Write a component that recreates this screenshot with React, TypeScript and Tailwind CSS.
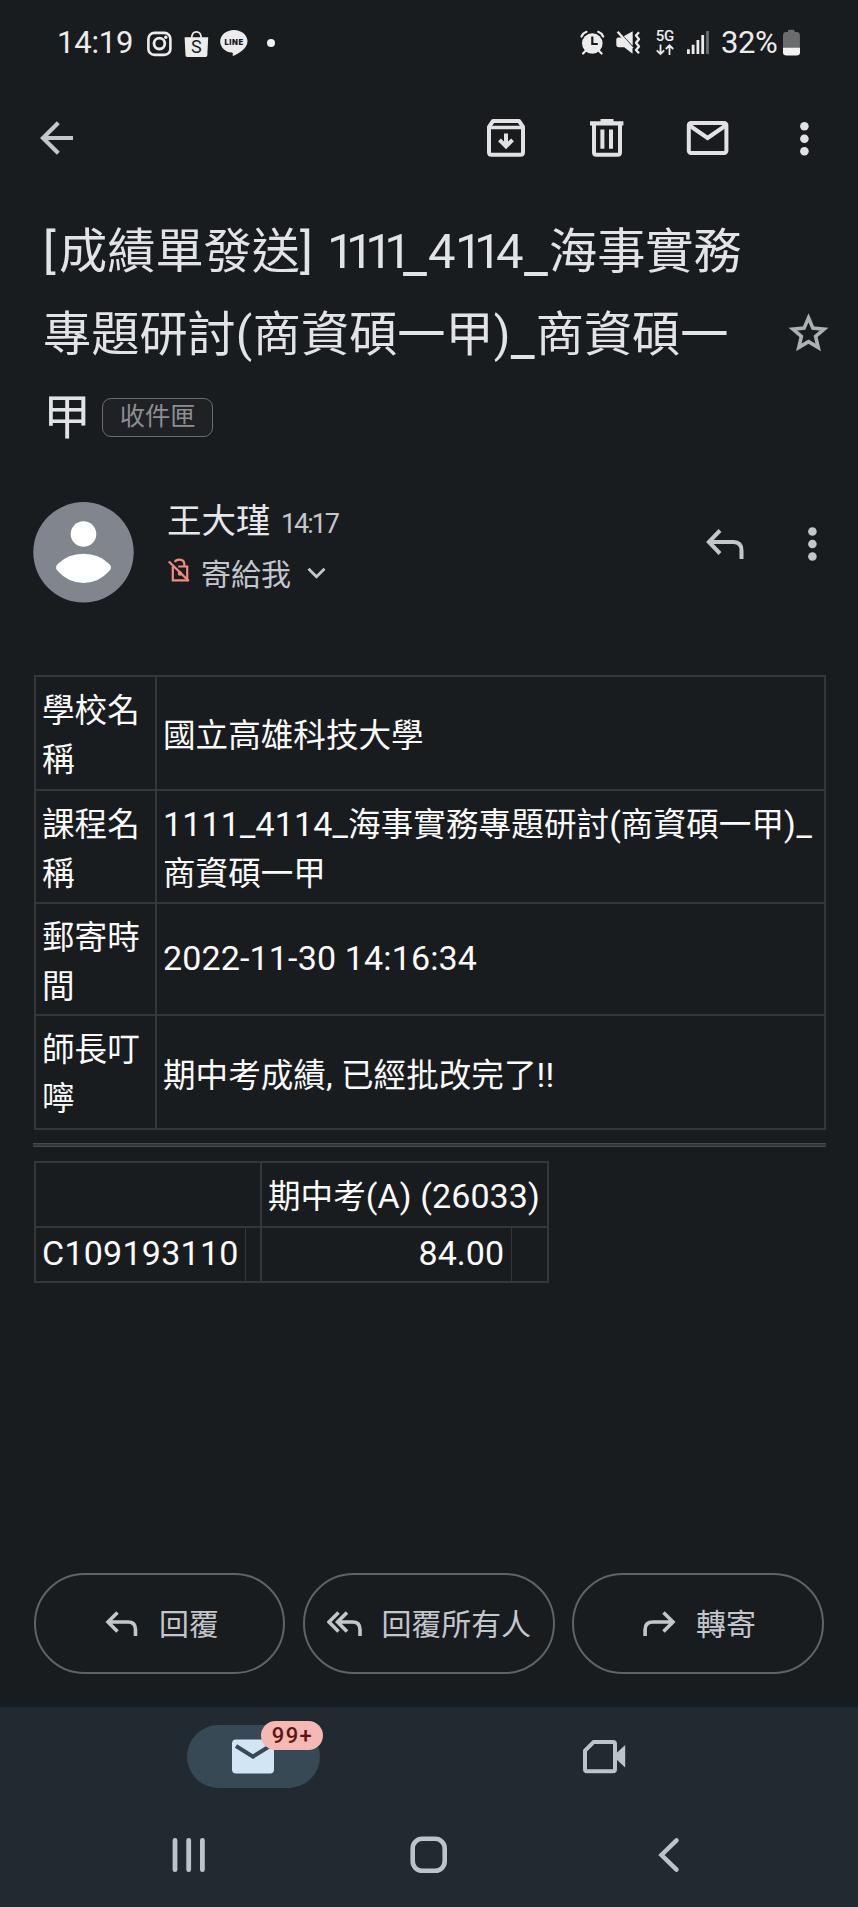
import type { ReactNode } from "react";

type IconProps = { box: [number, number, number, number]; className?: string; children: ReactNode };

function Icon({ box, className = "", children }: IconProps) {
  return (
    <svg
      viewBox={box.join(" ")}
      width={box[2]}
      height={box[3]}
      className={"block shrink-0 " + className}
      fill="none"
      aria-hidden="true"
    >
      {children}
    </svg>
  );
}

function StatusBar() {
  return (
    <div className="flex h-[84px] items-start pl-[57px] text-[#ececec]">
      <span className="mt-[25px] w-[90px] text-[31px] leading-[35px] tracking-[-0.2px]">14:19</span>
      <Icon box={[147, 31, 25, 26]} className="mt-[31px]">
        <rect x="148.4" y="32.9" width="22" height="22" rx="6" stroke="currentColor" strokeWidth="2.6" />
        <circle cx="159.4" cy="43.6" r="5.4" stroke="currentColor" strokeWidth="2.8" />
        <circle cx="165.8" cy="37.2" r="1.7" fill="currentColor" />
      </Icon>
      <Icon box={[184, 30, 25, 28]} className="ml-[12px] mt-[30px]">
        <path d="M191.6 38c.3-4 2.2-6.2 4.8-6.2s4.6 2.200 4.900 6.200" stroke="currentColor" strokeWidth="1.700" />
        <path d="M184.600 37.200h23.600l-.9 18c-.1 1.100-.7 1.700-1.800 1.700h-18.200c-1.100 0-1.700-.6-1.800-1.700z" fill="currentColor" />
        <text x="196.400" y="53" textAnchor="middle" fontSize="18" fontFamily="Roboto, sans-serif" fill="#191c1f">S</text>
      </Icon>
      <Icon box={[219, 29, 30, 28]} className="ml-[10px] mt-[29px]">
        <path
          d="M233.900 30c-7.600 0-13.700 5-13.700 11.400 0 5.700 4.900 10.400 11.500 11.200.9.200 1.300.7 1.200 1.500l-.3 1.900c5.200-2 14.900-7.600 14.900-14.600C247.500 35 241.500 30 233.900 30z"
          fill="currentColor"
        />
        <text x="233.800" y="44.800" textAnchor="middle" fontSize="7.600" fontWeight="900" textLength="18.500" fontFamily="Inter, sans-serif" fill="#191c1f">LINE</text>
      </Icon>
      <span className="ml-[18px] mt-[39px] size-[8px] rounded-full bg-[#f0f0f0]" />
      <Icon box={[581, 30, 25, 26]} className="ml-[305px] mt-[30px]">
        <circle cx="593.300" cy="43.500" r="10.300" fill="currentColor" />
        <path d="M582.500 36.500q1.500-3.500 5-4.700M604.200 36.500q-1.500-3.500-5-4.700" stroke="currentColor" strokeWidth="2.200" strokeLinecap="round" />
        <path d="M587 50.500l-3 3M599.600 50.500l3 3" stroke="currentColor" strokeWidth="2.200" strokeLinecap="round" />
        <path d="M593.300 36.500v7.500h5.500" stroke="#191c1f" strokeWidth="2.200" />
      </Icon>
      <Icon box={[616, 30, 26, 26]} className="ml-[10px] mt-[30px]">
        <path d="M617.300 39.500q0-2 2-2h4l10.200 11.800v4.400l-8.300-6.500h-5.200q-2.700 0-2.700-2.700z" fill="currentColor" />
        <path d="M624.800 36.200l8.900-4.900v14.400z" fill="currentColor" />
        <path d="M618.600 31.800l15 16.800" stroke="currentColor" strokeWidth="2.300" />
        <path d="M640 32.300l-3 3.200 3 3.700-3 3.600 3 3.700-3 3.500 3 3.300" stroke="currentColor" strokeWidth="2.300" strokeLinejoin="round" />
      </Icon>
      <Icon box={[653, 20, 26, 38]} className="ml-[11px] mt-[20px]">
        <text x="666" y="41" textAnchor="middle" fontSize="15" fontWeight="500" textLength="18.500" fontFamily="Roboto, sans-serif" fill="currentColor">5G</text>
        <path d="M661.500 44.500v9M657.800 50.300l3.700 3.700 3.700-3.700M670.500 55v-9M666.800 49l3.700-3.700 3.700 3.700" stroke="currentColor" strokeWidth="1.800" />
      </Icon>
      <Icon box={[687, 30, 24, 25]} className="ml-[8px] mt-[30px]">
        <path d="M689.400 49.200v4.900M694.100 44.800v9.300M698.900 40v14.100M703.700 35v19.100" stroke="currentColor" strokeWidth="2.800" />
        <path d="M708.500 31v23.100" stroke="#6b6d6f" strokeWidth="2.800" />
      </Icon>
      <span className="ml-[11px] mt-[25px] w-[61px] whitespace-nowrap text-[31px] leading-[35px] tracking-[-0.4px]">32%</span>
      <Icon box={[783, 29, 19, 27]} className="mt-[29px]">
        <path d="M789 32v-1q0-1.300 1.300-1.300h4q1.300 0 1.300 1.300v1h1.900q3.400 0 3.400 3.400V48H784V35.400q0-3.400 3.400-3.400z" fill="#6b6c6d" />
        <path d="M784 47.700h17v4.600q0 3.300-3.400 3.300h-10.200q-3.400 0-3.400-3.300z" fill="#f2f2f2" />
      </Icon>
    </div>
  );
}

function Toolbar() {
  return (
    <div className="flex h-[108px] items-start pl-[39px] text-[#e2e2e5]">
      <Icon box={[39, 121, 35, 35]} className="mt-[37px] text-[#c3c6cb]">
        <path d="M73 138H43.500M58.300 122.800L43 138l15.300 15.200" stroke="currentColor" strokeWidth="4.200" />
      </Icon>
      <Icon box={[486, 118, 40, 40]} className="ml-[412px] mt-[34px]">
        <path d="M493 121h26l4 5.800v25.400q0 2.600-2.600 2.600h-28.800q-2.600 0-2.600-2.600v-25.400z" stroke="currentColor" strokeWidth="4" strokeLinejoin="round" />
        <path d="M489 127.500h34" stroke="currentColor" strokeWidth="3.600" />
        <path d="M506 133.500v11M499.500 139.800l6.500 6.500 6.500-6.500" stroke="currentColor" strokeWidth="4" />
      </Icon>
      <Icon box={[589, 118, 36, 40]} className="ml-[63px] mt-[34px]">
        <path d="M590 121.200h33.400v4.300H590zM600.500 119h13v4h-13z" fill="currentColor" />
        <path d="M594 124v28.300q0 2.500 2.500 2.500h21q2.500 0 2.500-2.500V124" stroke="currentColor" strokeWidth="4" />
        <path d="M602.400 129.500v19.300M611 129.500v19.300" stroke="currentColor" strokeWidth="4" />
      </Icon>
      <Icon box={[686, 120, 44, 36]} className="ml-[61px] mt-[36px]">
        <rect x="688.800" y="123" width="37.600" height="30" rx="2.200" stroke="currentColor" strokeWidth="4" />
        <path d="M689.500 125.500l18.100 12.500 18.100-12.500" stroke="currentColor" strokeWidth="4.200" />
      </Icon>
      <Icon box={[799, 121, 12, 36]} className="ml-[69px] mt-[37px]">
        <g fill="currentColor">
          <circle cx="804.400" cy="126.200" r="4.300" />
          <circle cx="804.400" cy="138.700" r="4.300" />
          <circle cx="804.400" cy="151.300" r="4.300" />
        </g>
      </Icon>
    </div>
  );
}

function Subject() {
  return (
    <div className="flex h-[291px] items-start pl-[43px] pt-[18px]">
      <h1 className="w-[744px] whitespace-nowrap text-[48.200px] leading-[83px] text-[#e2e3e6]">
        <div className="flex">
          <span className="w-[16px]">[</span>
          <span>成績單發送</span>
          <span className="w-[27px]">]</span>
          <span className="w-[76px] text-[49px] tracking-[-8.400px]">1111</span>
          <span className="w-[25px] translate-y-[3px] text-[53px]">_</span>
          <span className="w-[27px] text-[49px]">4</span>
          <span className="w-[41px] text-[49px] tracking-[-8.400px]">11</span>
          <span className="w-[28px] text-[49px]">4</span>
          <span className="w-[25px] translate-y-[3px] text-[53px]">_</span>
          <span>海事實務</span>
        </div>
        <div className="flex">
          <span>專題研討</span>
          <span className="w-[17px]">(</span>
          <span>商資碩一甲</span>
          <span className="w-[17px]">)</span>
          <span className="w-[25px] translate-y-[3px] text-[53px]">_</span>
          <span>商資碩一</span>
        </div>
        <div className="flex h-[82px] items-center">
          <span>甲</span>
          <span className="ml-[10.500px] flex h-[39px] w-[111px] items-center rounded-[9px] border border-[#6b6d72] bg-[#1f2125] pl-[17px] text-[25.300px] leading-[36px] text-[#8c8e93]">
            收件匣
          </span>
        </div>
      </h1>
      <Icon box={[787, 312, 43, 42]} className="mt-[102px]">
        <path
          d="M808.500 317.800l4.400 10.300 11.200 1-8.500 7.400 2.600 10.900-9.700-5.800-9.700 5.800 2.600-10.900-8.500-7.400 11.200-1z"
          stroke="#adb0b5"
          strokeWidth="3.600"
        />
      </Icon>
    </div>
  );
}

function Sender() {
  return (
    <div className="flex h-[192px] items-start pl-[33px]">
      <Icon box={[33, 501, 102, 103]} className="mt-[18px]">
        <circle cx="83.500" cy="552.300" r="50.200" fill="#80858e" />
        <circle cx="83.500" cy="534" r="12.800" fill="#fff" />
        <path d="M56 567.500q0-2 2-3.800Q68 553.700 83.500 553.700t25.500 10q2 1.800 2 3.800t-2 3.800Q98.500 583 83.500 583T58 571.300q-2-1.800-2-3.800z" fill="#fff" />
      </Icon>
      <div className="ml-[32px] w-[539px] pt-[14px]">
        <div className="flex h-[48px] whitespace-nowrap leading-[48px]">
          <span className="w-[114px] text-[34.500px] text-[#e6e7ea]">王大瑾</span>
          <span className="mt-[3px] text-[27px] tracking-[-2.100px] text-[#c3c6cc]">14:17</span>
        </div>
        <div className="flex h-[56px] items-start text-[#c3c6cc]">
          <Icon box={[167, 558, 24, 24]} className="mt-[13px] text-[#f28b82]">
            <path d="M172.800 566.500v13.800h14.400v-13.800h-9" stroke="currentColor" strokeWidth="2.200" />
            <path d="M174.800 562q1-2.300 4.600-2.300 5 0 5 5v2" stroke="currentColor" strokeWidth="2.200" />
            <path d="M168.800 561.500l20 19.500" stroke="currentColor" strokeWidth="2.300" />
            <circle cx="180" cy="573.500" r="2.200" fill="currentColor" />
          </Icon>
          <span className="ml-[10px] mt-[5px] w-[105px] text-[30px] leading-[50px]">寄給我</span>
          <Icon box={[306, 566, 21, 14]} className="mt-[21px]">
            <path d="M308.500 568.800l8 8 8-8" stroke="currentColor" strokeWidth="2.800" />
          </Icon>
        </div>
      </div>
      <Icon box={[706, 528, 40, 33]} className="mt-[45px] text-[#c3c6cb]">
        <path d="M720 530.500L708.900 542 720 553.500M709 542h24.500q8 0 8 8.500v8.500" stroke="currentColor" strokeWidth="4" />
      </Icon>
      <Icon box={[807, 526, 12, 36]} className="ml-[61px] mt-[43px] text-[#c3c6cb]">
        <g fill="currentColor">
          <circle cx="812.400" cy="531.500" r="4.300" />
          <circle cx="812.400" cy="544" r="4.300" />
          <circle cx="812.400" cy="556.500" r="4.300" />
        </g>
      </Icon>
    </div>
  );
}

const line = "border-[#353637]";

function InfoRow({ label, height, children }: { label: ReactNode; height: string; children: ReactNode }) {
  return (
    <div className={"flex border-b-2 " + line + " " + height}>
      <div className={"w-[121px] border-r-2 pl-[6px] pt-[10px] " + line}>{label}</div>
      <div className="flex-1 pl-[6px]">{children}</div>
    </div>
  );
}

function MessageBody() {
  return (
    <div className="h-[898px] pl-[34px] pr-[32px] text-[32.600px] leading-[49px] text-[#fafafa]">
      <div className={"border-x-2 border-t-2 " + line}>
        <InfoRow height="h-[114px]" label={<>學校名<br />稱</>}>
          <p className="pt-[35px]">國立高雄科技大學</p>
        </InfoRow>
        <InfoRow height="h-[113px]" label={<>課程名<br />稱</>}>
          <p className="flex h-[59px] items-baseline whitespace-nowrap pt-[9px]">
            <span className="text-[34px] tracking-[0.150px]">1111_4114_</span>
            <span className="tracking-[0.060px]">海事實務專題研討<span className="text-[34px]">(</span>商資碩一甲<span className="text-[34px] tracking-[0.700px]">)_</span></span>
          </p>
          <p>商資碩一甲</p>
        </InfoRow>
        <InfoRow height="h-[112px]" label={<>郵寄時<br />間</>}>
          <p className="pt-[30px] text-[34px] tracking-[0.150px]">2022-11-30 14:16:34</p>
        </InfoRow>
        <InfoRow height="h-[114px]" label={<>師長叮<br />嚀</>}>
          <p className="pt-[35px]">期中考成績<span className="text-[34px]">, </span>已經批改完了<span className="text-[34px] tracking-[0.300px]">!!</span></p>
        </InfoRow>
      </div>
      <div className="ml-[-1px] mt-[13px] h-[4px] border-y border-[#48494a] bg-[#333536]" />
      <div className={"mt-[14px] w-[515px] border-2 " + line}>
        <div className={"flex h-[65px] border-b-2 " + line}>
          <div className={"w-[226px] border-r-2 " + line} />
          <div className="flex items-baseline whitespace-nowrap pl-[6px] pt-[9px]">
            <span>期中考</span>
            <span className="text-[34px] tracking-[0.100px]">(A) (26033)</span>
          </div>
        </div>
        <div className="flex h-[53px] text-[34px] leading-[50px]">
          <div className={"w-[210px] border-r pl-[6px] tracking-[0.250px] " + line}>C109193110</div>
          <div className={"w-[16px] border-r-2 " + line} />
          <div className={"w-[250px] border-r pr-[7px] text-right " + line}>84.00</div>
        </div>
      </div>
    </div>
  );
}

function ReplyActions() {
  const pill = "flex h-[101px] items-start rounded-full border-2 border-[#606266] ";
  return (
    <div className="flex h-[134px] items-start justify-between pl-[34px] pr-[34px] text-[29.900px] leading-[40px] text-[#c3c6cb]">
      <button className={pill + "w-[251px] pl-[69px]"}>
        <Icon box={[105, 1610, 34, 28]} className="mt-[35px]">
          <path d="M117.500 1612.500l-9.500 9.500 9.500 9.500M108 1622h20q7.500 0 7.500 7.500v6.500" stroke="currentColor" strokeWidth="3.600" />
        </Icon>
        <span className="ml-[20px] mt-[30px]">回覆</span>
      </button>
      <button className={pill + "w-[252px] whitespace-nowrap pl-[22px]"}>
        <Icon box={[327, 1610, 37, 28]} className="mt-[35px]">
          <path d="M338.500 1612.500l-9.500 9.500 9.500 9.500M347 1612.500l-9.500 9.500 9.500 9.500M338 1622h14.500q7.500 0 7.500 7.500v6.500" stroke="currentColor" strokeWidth="3.600" />
        </Icon>
        <span className="ml-[18px] mt-[30px]">回覆所有人</span>
      </button>
      <button className={pill + "w-[252px] pl-[68px]"}>
        <Icon box={[642, 1610, 34, 28]} className="mt-[35px]">
          <path d="M663.500 1612.500l9.500 9.500-9.500 9.500M673 1622h-20q-7.900 0-7.900 7.500v6.500" stroke="currentColor" strokeWidth="3.600" />
        </Icon>
        <span className="ml-[20px] mt-[30px]">轉寄</span>
      </button>
    </div>
  );
}

function BottomBar() {
  return (
    <div className="h-[200px] bg-[#222a31] text-[#bcc3cb]">
      <div className="flex h-[110px] items-start pl-[187px] pt-[18px]">
        <div className="relative h-[63px] w-[133px] rounded-full bg-[#374955] pl-[45px] pt-[14px]">
          <Icon box={[232, 1739, 42, 35]}>
            <rect x="232" y="1739.500" width="42" height="34" rx="4" fill="#d2e5f5" />
            <path d="M236 1746l17 10.600 17-10.600" stroke="#374955" strokeWidth="4" />
          </Icon>
          <span className="absolute left-[74px] top-[-4px] flex h-[29px] w-[62px] items-center justify-center rounded-full bg-[#f4b8b5] pl-px text-[22px] font-medium tracking-[1.400px] text-[#601410]">
            99+
          </span>
        </div>
        <Icon box={[582, 1738, 45, 37]} className="ml-[262px] mt-[13px]">
          <path d="M593.800 1741.900H613q2 0 2 2v25.400q0 2-2 2h-26q-2 0-2-2v-18.600z" stroke="currentColor" strokeWidth="4" strokeLinejoin="round" />
          <path d="M616 1753.500l9.200-8.500v22.500l-9.200-8.500z" fill="currentColor" />
        </Icon>
      </div>
      <div className="flex h-[90px] items-start pl-[171px] pt-[18px]">
        <Icon box={[171, 1835, 36, 40]}>
          <path d="M175 1840.300v29.400M188.700 1840.300v29.400M202.400 1840.300v29.400" stroke="currentColor" strokeWidth="4.800" strokeLinecap="round" />
        </Icon>
        <Icon box={[409, 1835, 40, 40]} className="ml-[202px]">
          <rect x="412.700" y="1838.800" width="32" height="32" rx="9.500" stroke="currentColor" strokeWidth="4.600" />
        </Icon>
        <Icon box={[657, 1835, 24, 40]} className="ml-[208px]">
          <path d="M676.500 1840.300L661.500 1855l15 14.700" stroke="currentColor" strokeWidth="4.500" strokeLinecap="round" />
        </Icon>
      </div>
    </div>
  );
}

export default function App() {
  return (
    <main className="h-[1907px] w-[858px] overflow-hidden bg-[#191c1f] font-['Roboto','Noto_Sans_CJK_TC',sans-serif]">
      <StatusBar />
      <Toolbar />
      <Subject />
      <Sender />
      <MessageBody />
      <ReplyActions />
      <BottomBar />
    </main>
  );
}
